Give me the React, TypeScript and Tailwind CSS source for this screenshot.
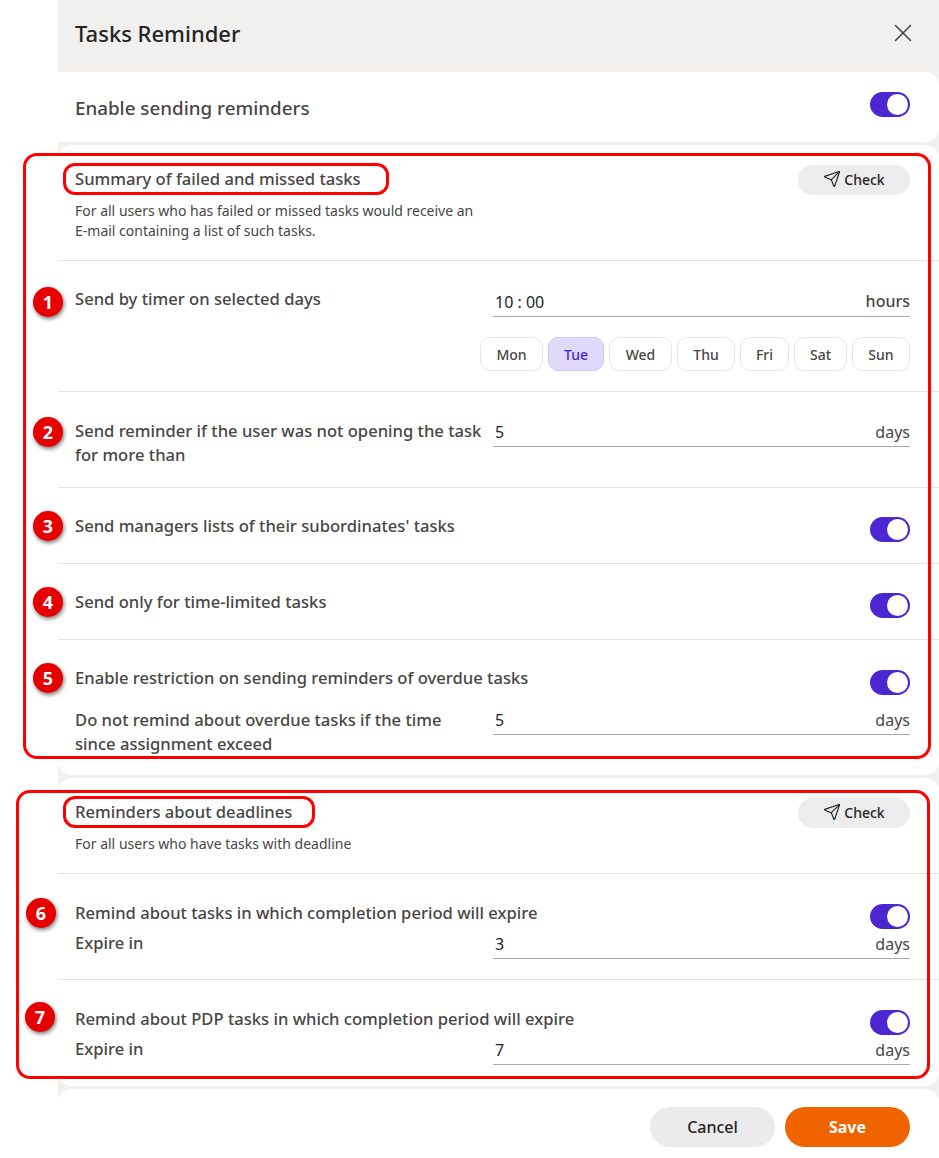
import { Send, X } from "lucide-react";

const days = [
  { name: "Mon", width: "w-[63px]" },
  { name: "Tue", width: "w-[56px]", active: true },
  { name: "Wed", width: "w-[63px]" },
  { name: "Thu", width: "w-[58px]" },
  { name: "Fri", width: "w-[49px]" },
  { name: "Sat", width: "w-[53px]" },
  { name: "Sun", width: "w-[58px]" },
];

const badges = [
  { n: 1, pos: "left-[33px] top-[287px]" },
  { n: 2, pos: "left-[33px] top-[417px]" },
  { n: 3, pos: "left-[33px] top-[511px]" },
  { n: 4, pos: "left-[33px] top-[587px]" },
  { n: 5, pos: "left-[33px] top-[663px]" },
  { n: 6, pos: "left-[26px] top-[898px]" },
  { n: 7, pos: "left-[25px] top-[1002px]" },
];

function Toggle() {
  return (
    <div className="flex h-[25px] w-10 items-center justify-end rounded-full bg-[#4b27d1] pr-[2px]">
      <div className="h-[21px] w-[21px] rounded-full bg-white" />
    </div>
  );
}

function Field({ value, unit, strong }: { value: string; unit: string; strong?: boolean }) {
  return (
    <div className="flex h-[26px] w-[417px] items-center justify-between border-b border-[#aaaaaa] pb-[3px] pl-[2px]">
      <span className="text-[16px] text-[#242424]">{value}</span>
      <span className={strong ? "-mt-[2px] text-[16px] font-medium text-[#484644]" : "text-[16px] text-[#484644]"}>
        {unit}
      </span>
    </div>
  );
}

function Label({ children, nowrap }: { children: React.ReactNode; nowrap?: boolean }) {
  return (
    <div
      className={
        nowrap
          ? "text-[16.6px] leading-6 font-medium whitespace-nowrap text-[#484644]"
          : "w-[418px] pr-2 text-[16.6px] leading-6 font-medium text-[#484644]"
      }
    >
      {children}
    </div>
  );
}

function CheckButton() {
  return (
    <button className="flex h-[30px] w-[112px] items-center justify-center gap-[3px] rounded-full bg-[#ececec] pb-[2px] text-[14px] font-medium text-[#242424]">
      <Send size={18} strokeWidth={1.5} />
      Check
    </button>
  );
}

function SectionHead({ title, lines }: { title: string; lines: string[] }) {
  return (
    <div className="flex justify-between border-b border-[#e3e3e3] pt-5 pr-[29px] pb-[19px] pl-[17px]">
      <div>
        <div className="pt-[2px]">
          <Label nowrap>{title}</Label>
        </div>
        <div className="mt-[10px] text-[14px] leading-5 text-[#484644]">
          {lines.map((l) => (
            <div key={l}>{l}</div>
          ))}
        </div>
      </div>
      <CheckButton />
    </div>
  );
}

export default function App() {
  return (
    <div
      className="relative h-[1158px] w-[939px] overflow-hidden bg-white pl-[58px]"
      style={{ fontFamily: '"Noto Sans", "Open Sans", sans-serif' }}
    >
      <div className="flex h-full flex-col bg-[#f1f0ee]">
        <div className="flex h-[72px] items-center justify-between pr-[21px] pb-[6px] pl-[17px]">
          <h1 className="text-[22px] font-medium text-[#242424]">Tasks Reminder</h1>
          <X size={30} strokeWidth={1.3} className="mb-[1px] text-[#484644]" />
        </div>

        <div className="flex h-[70px] items-center justify-between rounded-tr-[14px] rounded-br-[14px] bg-white pr-[29px] pl-[17px]">
          <div className="pt-[2px] text-[18.8px] font-medium text-[#484644]">Enable sending reminders</div>
          <div className="mb-[5px]">
            <Toggle />
          </div>
        </div>

        {/* first card */}
        <div className="mt-[3px] h-[630px] rounded-[14px] bg-white">
          <SectionHead
            title="Summary of failed and missed tasks"
            lines={["For all users who has failed or missed tasks would receive an", "E-mail containing a list of such tasks."]}
          />

          <div className="border-b border-[#e3e3e3] pt-[26px] pr-[29px] pb-5 pl-[17px]">
            <div className="flex">
              <Label>Send by timer on selected days</Label>
              <div className="pt-1">
                <Field value="10 : 00" unit="hours" strong />
              </div>
            </div>
            <div className="mt-5 flex justify-end gap-[5px]">
              {days.map((d) => (
                <div
                  key={d.name}
                  className={
                    d.active
                      ? `flex h-[34px] ${d.width} items-center justify-center rounded-[10px] border border-[#cfc6f3] bg-[#e0daf8] text-[14px] font-medium text-[#4b27d1]`
                      : `flex h-[34px] ${d.width} items-center justify-center rounded-[10px] border border-[#e6e6e6] text-[14px] font-medium text-[#484644]`
                  }
                >
                  {d.name}
                </div>
              ))}
            </div>
          </div>

          <div className="flex h-[96px] border-b border-[#e3e3e3] pt-[27px] pr-[29px] pl-[17px]">
            <Label>Send reminder if the user was not opening the task for more than</Label>
            <div className="pt-[2px]">
              <Field value="5" unit="days" />
            </div>
          </div>

          <div className="flex h-[76px] justify-between border-b border-[#e3e3e3] pt-[26px] pr-[29px] pl-[17px]">
            <Label nowrap>Send managers lists of their subordinates' tasks</Label>
            <div className="pt-[3px]">
              <Toggle />
            </div>
          </div>

          <div className="flex h-[76px] justify-between border-b border-[#e3e3e3] pt-[26px] pr-[29px] pl-[17px]">
            <Label nowrap>Send only for time-limited tasks</Label>
            <div className="pt-[3px]">
              <Toggle />
            </div>
          </div>

          <div className="pt-[26px] pr-[29px] pl-[17px]">
            <div className="flex justify-between">
              <Label nowrap>Enable restriction on sending reminders of overdue tasks</Label>
              <div className="pt-1">
                <Toggle />
              </div>
            </div>
            <div className="mt-[13px] flex">
              <Label>
                Do not remind about overdue tasks if the time
                <br />
                since assignment exceed
              </Label>
              <div className="pt-[1px]">
                <Field value="5" unit="days" />
              </div>
            </div>
          </div>
        </div>

        {/* second card */}
        <div className="mt-[3px] h-[308px] rounded-[14px] bg-white">
          <SectionHead title="Reminders about deadlines" lines={["For all users who have tasks with deadline"]} />

          <div className="h-[106px] border-b border-[#e3e3e3] pt-[27px] pr-[29px] pl-[17px]">
            <div className="flex justify-between">
              <Label nowrap>Remind about tasks in which completion period will expire</Label>
              <div className="pt-[3px]">
                <Toggle />
              </div>
            </div>
            <div className="mt-[2px] flex">
              <Label>Expire in</Label>
              <div className="pt-[2px]">
                <Field value="3" unit="days" />
              </div>
            </div>
          </div>

          <div className="pt-[27px] pr-[29px] pl-[17px]">
            <div className="flex justify-between">
              <Label nowrap>Remind about PDP tasks in which completion period will expire</Label>
              <div className="pt-[3px]">
                <Toggle />
              </div>
            </div>
            <div className="mt-[2px] flex">
              <Label>Expire in</Label>
              <div className="pt-[2px]">
                <Field value="7" unit="days" />
              </div>
            </div>
          </div>
        </div>

        <div className="mt-[3px] flex flex-1 justify-end gap-[10px] rounded-t-[14px] bg-white pt-[18px] pr-[29px]">
          <button className="h-10 w-[125px] rounded-full bg-[#ebebeb] text-[16px] font-medium text-[#242424]">Cancel</button>
          <button className="h-10 w-[125px] rounded-full bg-[#f06400] text-[16px] font-bold text-white">Save</button>
        </div>
      </div>

      {/* red annotations over the screenshot */}
      <div className="absolute top-[153px] left-[23px] h-[606px] w-[908px] rounded-[14px] border-[3px] border-[#ff0000]" />
      <div className="absolute top-[790px] left-[16px] h-[289px] w-[914px] rounded-[14px] border-[3px] border-[#ff0000]" />
      <div className="absolute top-[163px] left-[63px] h-[32px] w-[326px] rounded-[12px] border-[3px] border-[#ff0000]" />
      <div className="absolute top-[796px] left-[63px] h-[32px] w-[252px] rounded-[12px] border-[3px] border-[#ff0000]" />
      {badges.map((b) => (
        <div
          key={b.n}
          className={`absolute ${b.pos} flex h-[30px] w-[30px] items-center justify-center rounded-full bg-[#e60000] text-[18px] font-bold text-white shadow-[1px_2px_4px_rgba(0,0,0,0.55)]`}
        >
          {b.n}
        </div>
      ))}
    </div>
  );
}
